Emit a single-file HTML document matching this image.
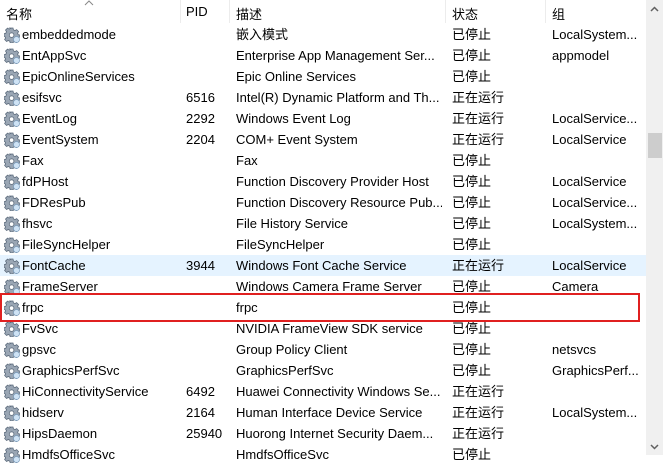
<!DOCTYPE html><html><head><meta charset="utf-8"><style>
body{margin:0;width:663px;height:455px;overflow:hidden;background:#fff;font-family:"Liberation Sans","Noto Sans CJK SC",sans-serif;font-size:13px;color:#000;position:relative}
.h{position:absolute;top:0;left:0;width:646px;height:23px;background:#fff}
.h span,.r span{position:absolute;white-space:nowrap;overflow:hidden}
.h span{top:4px}
.d{position:absolute;top:0;width:1px;height:23px;background:#ececec}
.r{position:absolute;left:0;width:646px;height:21px;line-height:21px}
.hv{background:#e5f3ff}
.ic{position:absolute;left:4px;top:3px;width:16px;height:16px}
.sb{position:absolute;left:646px;top:0;width:17px;height:455px;background:#f0f0f0}
</style></head><body>
<div class="h">
<span style="left:6px">名称</span><span style="left:186px">PID</span><span style="left:236px">描述</span><span style="left:452px">状态</span><span style="left:552px">组</span>
<div class="d" style="left:180px"></div><div class="d" style="left:229px"></div><div class="d" style="left:445px"></div><div class="d" style="left:545px"></div>
<svg style="position:absolute;left:84px;top:0" width="10" height="6"><path d="M1 5L5 1L9 5" fill="none" stroke="#888"/></svg>
</div>
<div id="rows"></div>
<div style="position:absolute;left:0;top:293px;width:636px;height:25px;border:2px solid #e02020;box-sizing:content-box"></div>
<div class="sb">
<svg style="position:absolute;left:4px;top:6px" width="9" height="6"><path d="M1 5L4.5 1.5L8 5" fill="none" stroke="#606060" stroke-width="1.5"/></svg>
<div style="position:absolute;left:2px;top:133px;width:14px;height:25px;background:#cdcdcd"></div>
<svg style="position:absolute;left:4px;top:444px" width="9" height="6"><path d="M1 1L4.5 4.5L8 1" fill="none" stroke="#606060" stroke-width="1.5"/></svg>
</div>
<script>
var d=[["embeddedmode","","嵌入模式","已停止","LocalSystem..."],
["EntAppSvc","","Enterprise App Management Ser...","已停止","appmodel"],
["EpicOnlineServices","","Epic Online Services","已停止",""],
["esifsvc","6516","Intel(R) Dynamic Platform and Th...","正在运行",""],
["EventLog","2292","Windows Event Log","正在运行","LocalService..."],
["EventSystem","2204","COM+ Event System","正在运行","LocalService"],
["Fax","","Fax","已停止",""],
["fdPHost","","Function Discovery Provider Host","已停止","LocalService"],
["FDResPub","","Function Discovery Resource Pub...","已停止","LocalService..."],
["fhsvc","","File History Service","已停止","LocalSystem..."],
["FileSyncHelper","","FileSyncHelper","已停止",""],
["FontCache","3944","Windows Font Cache Service","正在运行","LocalService"],
["FrameServer","","Windows Camera Frame Server","已停止","Camera"],
["frpc","","frpc","已停止",""],
["FvSvc","","NVIDIA FrameView SDK service","已停止",""],
["gpsvc","","Group Policy Client","已停止","netsvcs"],
["GraphicsPerfSvc","","GraphicsPerfSvc","已停止","GraphicsPerf..."],
["HiConnectivityService","6492","Huawei Connectivity Windows Se...","正在运行",""],
["hidserv","2164","Human Interface Device Service","正在运行","LocalSystem..."],
["HipsDaemon","25940","Huorong Internet Security Daem...","正在运行",""],
["HmdfsOfficeSvc","","HmdfsOfficeSvc","已停止",""]];
var ic='<svg class="ic" viewBox="0 0 16 16"><g fill="#9aa6b4" stroke="#5c6b7c" stroke-width=".8"><path d="M6 1h3l.4 1.8 1.6.8 1.6-1 2 2-1 1.6.7 1.6L16 8v2l-1.9.4-.7 1.6 1 1.6-2 2-1.6-1-1.6.7L8.8 16H6.2l-.4-1.8-1.6-.7-1.6 1-2-2 1-1.6L.9 9.6 0 9.3V6.7l1.8-.4.7-1.6-1-1.6 2-2 1.6 1 1.6-.7z"/><circle cx="7.6" cy="8.1" r="2.3" fill="#fff"/></g><circle cx="12.5" cy="12.5" r="3" fill="#cfe3f5" stroke="#7a9cbc" stroke-width=".7"/></svg>';
var h='';d.forEach(function(r,i){h+='<div class="r'+(i==11?' hv':'')+'" style="top:'+(24+21*i)+'px">'+ic+'<span style="left:22px;width:156px">'+r[0]+'</span><span style="left:186px">'+r[1]+'</span><span style="left:236px;width:206px">'+r[2]+'</span><span style="left:452px">'+r[3]+'</span><span style="left:552px;width:92px">'+r[4]+'</span></div>'});
document.getElementById('rows').innerHTML=h;
</script>
</body></html>
